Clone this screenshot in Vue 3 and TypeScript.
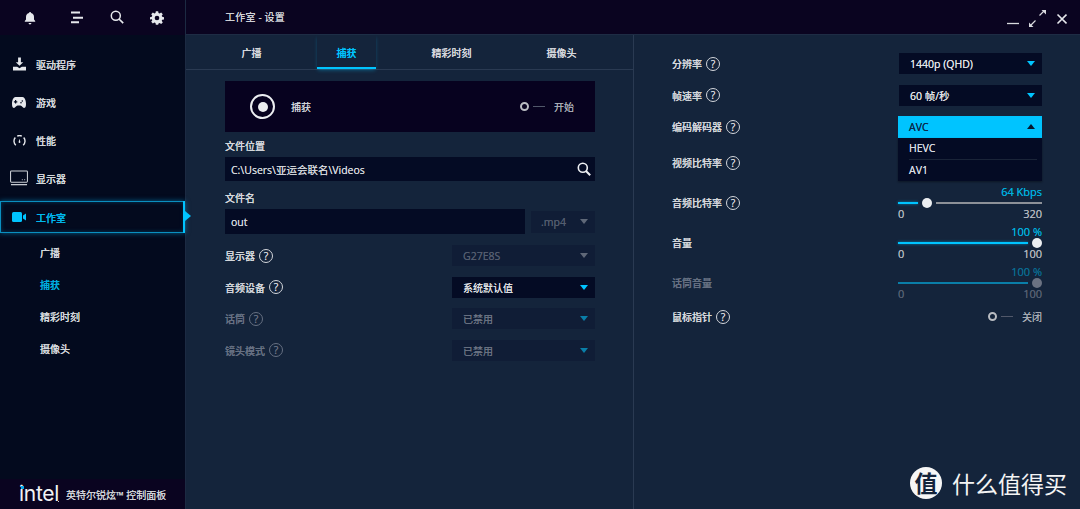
<template>
  <div class="app">
    <aside class="sidebar">
      <div class="side-top">
        <svg class="top-ico bell" viewBox="0 0 14 14"><path d="M7 1c.6 0 1 .4 1 .9 2 .5 3 2 3 4v2.6l1.200 1.600v.6H1.800v-.6L3 8.500V5.900c0-2 1-3.500 3-4C6 1.400 6.400 1 7 1zM5.600 12h2.800c0 .8-.6 1.400-1.400 1.400S5.600 12.800 5.600 12z" fill="#e6e8ec"/></svg>
        <svg class="top-ico lines" viewBox="0 0 14 14"><path d="M1 1.500h9M3 6.800h10M1 11.300h8" stroke="#e6e8ec" stroke-width="2" fill="none"/></svg>
        <svg class="top-ico search" viewBox="0 0 14 14"><circle cx="5.800" cy="5.800" r="4.500" stroke="#e6e8ec" stroke-width="1.500" fill="none"/><path d="M9 9l4.200 4.200" stroke="#e6e8ec" stroke-width="1.700"/></svg>
        <svg class="top-ico gear" viewBox="0 0 24 24"><path fill-rule="evenodd" d="M10 1h4l.6 3.100 1.900.8L19.100 3.100 21.900 6l-1.800 2.600.8 1.900L24 11v4l-3.100.5-.8 1.900 1.800 2.700-2.800 2.800-2.600-1.800-1.900.8L14 24h-4l-.6-3.100-1.900-.8-2.600 1.800-2.800-2.800 1.800-2.700-.8-1.900L0 15v-4l3.100-.5.800-1.900L2.100 6l2.800-2.900 2.600 1.800 1.900-.8L10 1zm2 7.500a4 4 0 1 0 0 8 4 4 0 0 0 0-8z" fill="#e6e8ec" transform="translate(0 -.5)"/></svg>
      </div>

      <nav class="side-nav">
        <a v-for="item in navItems" :key="item.label" class="nav-item" :class="{ active: item.active }">
          <span class="nav-ico">
            <svg v-if="item.icon === 'download'" width="13" height="14" viewBox="0 0 14 14"><path d="M5.500 0h3v5h2.500L7 9 3 5h2.500zM0 10h4.500L7 11.500 9.500 10H14v4H0z" fill="#e6e8ec"/></svg>
            <svg v-else-if="item.icon === 'game'" width="14" height="11" viewBox="0 0 14 11"><path fill-rule="evenodd" d="M3.500 0h7C12.500 0 14 3 14 7c0 3-1 4-2 4-1.300 0-2-2.500-3.500-2.500h-3C4 8.500 3.300 11 2 11 1 11 0 10 0 7 0 3 1.500 0 3.500 0zM3 3v1.200H1.900v1.200H3v1.200h1.200V5.400h1.100V4.200H4.200V3zm7.300.2a.8.800 0 1 0 0 1.600.8.800 0 0 0 0-1.600zM9 5a.8.800 0 1 0 0 1.600A.8.800 0 0 0 9 5z" fill="#e6e8ec"/></svg>
            <svg v-else-if="item.icon === 'gauge'" width="13" height="11" viewBox="0 0 13 11"><path d="M2.800 10.300C.6 8.200.4 4.700 2.300 2.500M4.200 1.100C5.700.4 7.300.4 8.800 1.100M10.700 2.500c1.900 2.200 1.700 5.700-.5 7.800" stroke="#e6e8ec" stroke-width="1.400" fill="none"/><path d="M6.500 3.800l.9 3.300a.9.900 0 1 1-1.800 0z" fill="#e6e8ec"/></svg>
            <svg v-else-if="item.icon === 'monitor'" width="19" height="17" viewBox="0 0 19 17"><path d="M1.500.6h16c.5 0 .9.400.9.900v10c0 .5-.4.900-.9.900h-16a.9.900 0 0 1-.9-.9v-10c0-.5.400-.9.900-.9z" stroke="#cfd3d9" stroke-width="1.100" fill="none"/><path d="M1 15h17" stroke="#cfd3d9" stroke-width="1.300"/><path d="M12.500 9.800h1M15 9.800h1" stroke="#cfd3d9" stroke-width="1"/></svg>
            <svg v-else width="14" height="10" viewBox="0 0 14 10"><rect width="10" height="10" rx="1.500" fill="#00c4ff"/><path d="M11 3.500L14 1.500v7l-3-2z" fill="#00c4ff"/></svg>
          </span>
          <span>{{ item.label }}</span>
        </a>
      </nav>

      <div class="sub-nav">
        <a v-for="(sub, i) in tabs" :key="sub" class="sub-item" :class="{ on: i === 1 }">{{ sub }}</a>
      </div>

      <div class="side-foot">
        <span class="intel">intel<i class="intel-dot"></i><i class="intel-end"></i></span>
        <span class="foot-text">英特尔锐炫™ 控制面板</span>
      </div>
    </aside>

    <main class="main">
      <header class="titlebar">
        <span class="title">工作室 - 设置</span>
        <svg class="win" width="60" height="28" viewBox="0 0 60 28">
          <path d="M0 20.500h12" stroke="#d8dade" stroke-width="1.300"/>
          <path d="M24 22l4.500-4.500M32.500 12.500L37 8" stroke="#d8dade" stroke-width="1.200"/>
          <path d="M22 19.500V24h4.500zM39 7h-4.500L39 11.500z" fill="#d8dade"/>
          <path d="M50.500 11.500l9 9M59.500 11.500l-9 9" stroke="#e6e8ec" stroke-width="1.600"/>
        </svg>
      </header>

      <div class="content">
        <section class="left">
          <div class="tabs">
            <a v-for="(tab, i) in tabs" :key="tab" class="tab" :class="{ on: i === 1 }">{{ tab }}</a>
          </div>

          <div class="form">
            <div class="capture">
              <span class="rec"><span class="rec-dot"></span></span>
              <span class="capture-label">捕获</span>
              <span class="toggle capture-toggle"><i class="t-knob"></i><i class="t-line"></i><em>开始</em></span>
            </div>

            <label class="field-label first">文件位置</label>
            <div class="input path">
              <span>C:\Users\亚运会联名\Videos</span>
              <svg width="14" height="14" viewBox="0 0 14 14"><circle cx="5.800" cy="5.800" r="4.500" stroke="#eef0f3" stroke-width="1.600" fill="none"/><path d="M9 9l4.200 4.200" stroke="#eef0f3" stroke-width="2"/></svg>
            </div>

            <label class="field-label second">文件名</label>
            <div class="name-row">
              <div class="input name"><span>out</span></div>
              <div class="select ext dis"><span>.mp4</span><i class="caret gray"></i></div>
            </div>

            <div class="settings">
              <div v-for="row in leftRows" :key="row.label" class="lrow" :class="{ muted: row.muted }">
                <span class="rlabel">{{ row.label }}<i class="help">?</i></span>
                <div class="select wide" :class="row.kind">
                  <span>{{ row.value }}</span>
                  <i class="caret" :class="row.caret"></i>
                </div>
              </div>
            </div>
          </div>
        </section>

        <section class="right">
          <div v-for="row in selectRows" :key="row.label" class="rrow">
            <span class="rlabel">{{ row.label }}<i class="help">?</i></span>
            <div class="select wide on"><span>{{ row.value }}</span><i class="caret"></i></div>
          </div>

          <div class="rrow">
            <span class="rlabel">编码解码器<i class="help">?</i></span>
            <div class="combo">
              <div class="select open"><span>AVC</span><i class="caret up"></i></div>
              <ul class="menu">
                <li>HEVC</li>
                <li>AV1</li>
              </ul>
            </div>
          </div>

          <div class="rrow tall">
            <span class="rlabel">视频比特率<i class="help">?</i></span>
          </div>

          <div v-for="s in sliders" :key="s.label" class="rrow tall" :class="{ muted: s.muted }">
            <span class="rlabel">{{ s.label }}<i v-if="s.help" class="help">?</i></span>
            <div class="slider">
              <div class="s-value">{{ s.value }}</div>
              <div class="s-track">
                <i class="s-fill" :style="{ width: s.fill + 'px' }"></i>
                <i class="s-knob"></i>
                <i v-if="s.fill < 130" class="s-rest"></i>
              </div>
              <div class="s-range"><span>{{ s.min }}</span><span>{{ s.max }}</span></div>
            </div>
          </div>

          <div class="rrow last">
            <span class="rlabel">鼠标指针<i class="help">?</i></span>
            <span class="toggle"><i class="t-knob"></i><i class="t-line"></i><em>关闭</em></span>
          </div>
        </section>
      </div>
    </main>

    <div class="watermark">
      <span class="wm-badge">值</span>
      <span class="wm-text">什么值得买</span>
    </div>
  </div>
</template>

<script setup lang="ts">
const tabs = ['广播', '捕获', '精彩时刻', '摄像头']

const navItems = [
  { label: '驱动程序', icon: 'download', active: false },
  { label: '游戏', icon: 'game', active: false },
  { label: '性能', icon: 'gauge', active: false },
  { label: '显示器', icon: 'monitor', active: false },
  { label: '工作室', icon: 'camera', active: true },
]

const leftRows = [
  { label: '显示器', value: 'G27E8S', kind: 'dis', caret: 'gray', muted: false },
  { label: '音频设备', value: '系统默认值', kind: 'on', caret: '', muted: false },
  { label: '话筒', value: '已禁用', kind: 'dis', caret: 'dim', muted: true },
  { label: '镜头模式', value: '已禁用', kind: 'dis', caret: 'dim', muted: true },
]

const selectRows = [
  { label: '分辨率', value: '1440p (QHD)' },
  { label: '帧速率', value: '60 帧/秒' },
]

const sliders = [
  { label: '音频比特率', help: true, value: '64 Kbps', fill: 20, min: '0', max: '320', muted: false },
  { label: '音量', help: false, value: '100 %', fill: 130, min: '0', max: '100', muted: false },
  { label: '话筒音量', help: false, value: '100 %', fill: 130, min: '0', max: '100', muted: true },
]
</script>

<style scoped>
.app {
  position: relative;
  display: flex;
  width: 1080px;
  height: 509px;
  overflow: hidden;
  background: #14243b;
  color: #d3d6db;
  font-family: "Open Sans", "Noto Sans CJK SC", sans-serif;
  font-size: 10px;
  text-shadow: 0 0 0.6px currentColor;
}

/* sidebar */
.sidebar {
  display: flex;
  flex-direction: column;
  flex: none;
  width: 185px;
  background: #030a1e;
  border-right: 1px solid #1c2a42;
}

.side-top {
  position: relative;
  flex: none;
  height: 35px;
  background: #0a0420;
}

.top-ico {
  position: absolute;
  top: 11px;
  width: 14px;
  height: 14px;
}
.bell { left: 23px; }
.lines { left: 70px; }
.search { left: 110px; top: 10px; }
.gear { left: 150px; top: 11px; }

.side-nav {
  display: flex;
  flex-direction: column;
  padding-top: 10px;
}

.nav-item {
  display: flex;
  align-items: center;
  height: 38.250px;
  padding-left: 10px;
  box-sizing: border-box;
  font-weight: 500;
}

.nav-ico {
  display: flex;
  justify-content: center;
  width: 18px;
  margin-right: 8px;
}

.nav-item.active {
  position: relative;
  height: 32px;
  margin-top: 3px;
  border: 1px solid #0a8fc0;
  box-shadow: 0 0 5px rgba(0, 170, 230, 0.55), inset 0 0 4px rgba(0, 170, 230, 0.3);
  padding-left: 9px;
  color: #00b8ee;
}
.nav-item.active::before {
  content: "";
  position: absolute;
  top: -1px;
  right: -1px;
  bottom: -1px;
  width: 2px;
  background: #00c4ff;
}
.nav-item.active::after {
  content: "";
  position: absolute;
  top: 9px;
  right: -7px;
  border-left: 6px solid #00c4ff;
  border-top: 5px solid transparent;
  border-bottom: 5px solid transparent;
}

.sub-nav {
  display: flex;
  flex-direction: column;
  flex: 1;
  padding-top: 4px;
  padding-left: 40px;
}

.sub-item {
  height: 32px;
  line-height: 32px;
  font-weight: 500;
}
.sub-item.on { color: #00aede; }

.side-foot {
  display: flex;
  align-items: center;
  flex: none;
  height: 30px;
  padding-left: 19px;
  background: #0a0420;
}

.intel {
  position: relative;
  width: 47px;
  font-family: Inter, sans-serif;
  font-size: 21px;
  line-height: 26px;
  letter-spacing: -0.3px;
  color: #f2f3f5;
  text-shadow: none;
}
.intel-dot {
  position: absolute;
  top: 5px;
  left: 1.500px;
  width: 3px;
  height: 3px;
  background: #08a8e8;
}
.intel-end {
  position: absolute;
  top: 20px;
  left: 39px;
  width: 1px;
  height: 1px;
  background: #d3d6db;
}

.foot-text {
  font-size: 10px;
  color: #d3d6db;
}

/* main */
.main {
  display: flex;
  flex-direction: column;
  flex: 1;
  min-width: 0;
}

.titlebar {
  display: flex;
  align-items: flex-start;
  justify-content: space-between;
  flex: none;
  padding: 3px 13px 0 39px;
  height: 31px;
  background: #0a0420;
  border-bottom: 1px solid #1e2c44;
}

.title {
  line-height: 28px;
  letter-spacing: 0.2px;
  color: #d3d6db;
}

.content {
  display: flex;
  flex: 1;
  min-height: 0;
}

.left {
  flex: none;
  width: 447px;
  border-right: 1px solid #2a3a52;
}

.tabs {
  display: flex;
  gap: 36px;
  height: 34px;
  padding-left: 36px;
  border-bottom: 1px solid #2a3a52;
}

.tab {
  padding: 0 19.500px;
  height: 34px;
  line-height: 37px;
  font-weight: 500;
}
.tab.on {
  height: 32px;
  color: #00c4ff;
  border-bottom: 2px solid #00c4ff;
  box-shadow: 0 2px 4px -1px rgba(0, 196, 255, 0.4);
}

.form {
  padding: 11px 38px 0 39px;
}

.capture {
  display: flex;
  align-items: center;
  height: 51px;
  padding: 0 21px 0 25px;
  background: #07021f;
}

.rec {
  display: flex;
  align-items: center;
  justify-content: center;
  width: 25px;
  height: 25px;
  box-sizing: border-box;
  border: 2px solid #eceef1;
  border-radius: 50%;
  margin-right: 16px;
}
.rec-dot {
  width: 10px;
  height: 10px;
  border-radius: 50%;
  background: #eceef1;
}

.capture-toggle { margin-left: auto; }

.toggle {
  display: inline-flex;
  align-items: center;
}
.toggle em {
  font-style: normal;
  color: #a9adb5;
  margin-left: 9px;
}
.t-knob {
  width: 9px;
  height: 9px;
  box-sizing: border-box;
  border: 2px solid #b9bcc2;
  border-radius: 50%;
}
.t-line {
  width: 12px;
  height: 1px;
  margin-left: 4px;
  background: #51586a;
}

.field-label {
  display: block;
  font-weight: 500;
}
.field-label.first { height: 25px; line-height: 28px; }
.field-label.second { height: 28px; line-height: 34px; }

.input {
  display: flex;
  align-items: center;
  justify-content: space-between;
  height: 25px;
  padding: 0 4px 0 6px;
  background: #040b24;
  font-size: 10.500px;
  box-sizing: border-box;
}
.path { height: 24px; }

.name-row {
  display: flex;
  align-items: center;
  justify-content: space-between;
}
.name { width: 300px; }

.select {
  display: flex;
  align-items: center;
  justify-content: space-between;
  box-sizing: border-box;
  height: 21px;
  padding: 0 7px 0 11px;
  font-size: 10.500px;
}
.select.on { background: #040b24; color: #e2e4e8; }
.select.dis { background: #101d36; color: #545d6f; }
.ext { width: 64px; height: 22px; padding-left: 10px; }
.wide { width: 143px; }

.caret {
  width: 0;
  height: 0;
  border-left: 4.500px solid transparent;
  border-right: 4.500px solid transparent;
  border-top: 5px solid #00c4ff;
}
.caret.gray { border-top-color: #5f6878; }
.caret.dim { border-top-color: #0a7ea8; }
.caret.up {
  border-top: 0;
  border-bottom: 5px solid #06182e;
}

.settings {
  display: flex;
  flex-direction: column;
  padding-top: 6px;
}

.lrow {
  display: flex;
  align-items: center;
  justify-content: space-between;
  height: 31.500px;
}
.lrow:not(:first-child) .select { font-size: 10px; }

.rlabel {
  display: inline-flex;
  align-items: center;
  font-weight: 500;
}

.help {
  display: inline-block;
  width: 14px;
  height: 14px;
  line-height: 12px;
  margin-left: 4px;
  box-sizing: border-box;
  border: 1px solid currentColor;
  border-radius: 50%;
  text-align: center;
  font-style: normal;
  font-weight: 400;
  font-size: 10.500px;
}

.muted .rlabel { color: #667082; }

.lrow.muted .select { color: #6a7282; }

.right {
  flex: 1;
  padding: 13px 38px 0 38px;
  min-width: 0;
}

.rrow {
  display: flex;
  align-items: center;
  justify-content: space-between;
  height: 31.500px;
}
.rrow.tall { height: 40px; }
.rrow.last { height: 28px; }

.combo {
  position: relative;
  width: 144px;
  height: 22px;
}
.select.open {
  height: 22px;
  background: #00c4ff;
  color: #0a2a4a;
}

.menu {
  position: absolute;
  top: 22px;
  left: 0;
  right: 0;
  margin: 0;
  padding: 0 5px 0 11px;
  list-style: none;
  background: #040b24;
  box-shadow: 0 1px 2px rgba(0, 0, 0, 0.4);
  font-size: 10.500px;
  color: #d8dbe0;
}
.menu li {
  height: 21px;
  line-height: 21px;
}
.menu li:first-child { border-bottom: 1px solid #1a2438; }

.slider {
  width: 144px;
  font-size: 11px;
}

.s-value {
  height: 11px;
  line-height: 12px;
  text-align: right;
  color: #00aede;
}

.s-track {
  display: flex;
  align-items: center;
  height: 10px;
  margin-top: 1px;
}
.s-fill {
  flex: none;
  height: 2px;
  background: #00c4ff;
  box-shadow: 0 0 3px rgba(0, 196, 255, 0.6);
}
.s-knob {
  flex: none;
  width: 10px;
  height: 10px;
  margin-left: 4px;
  border-radius: 50%;
  background: #eceef1;
}
.s-rest {
  flex: 1;
  height: 2px;
  margin-left: 4px;
  background: #8d9198;
}

.s-range {
  display: flex;
  justify-content: space-between;
  height: 11px;
  line-height: 11px;
  color: #b2b6bd;
}

.muted .s-value { color: #0a6a90; }
.muted .s-fill { background: #0a7ea8; box-shadow: none; }
.muted .s-knob { background: #6b7282; }
.muted .s-range { color: #566072; }

/* site watermark */
.watermark {
  position: absolute;
  left: 910px;
  top: 466px;
  display: flex;
  align-items: center;
  gap: 10px;
  font-family: "Noto Sans CJK SC", sans-serif;
  text-shadow: none;
}
.wm-badge {
  width: 32px;
  height: 32px;
  line-height: 31px;
  border-radius: 50%;
  background: #f6f6f6;
  color: #14243b;
  text-align: center;
  font-size: 23px;
  font-weight: 700;
}
.wm-text {
  color: #f4f4f4;
  font-size: 23px;
}
</style>

<style>
html,
body {
  margin: 0;
  background: #14243b;
}
</style>
